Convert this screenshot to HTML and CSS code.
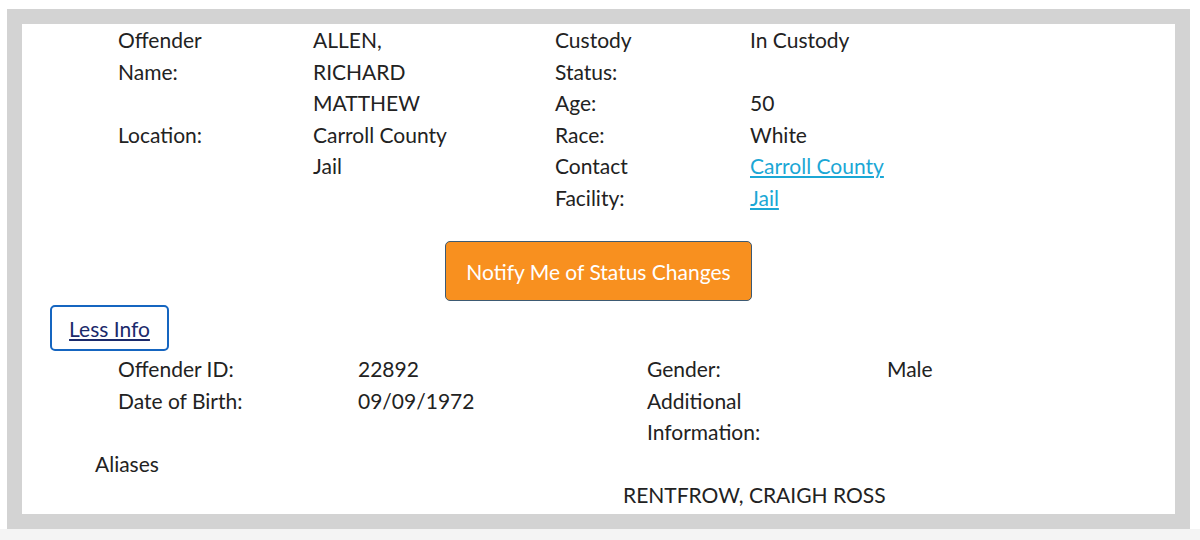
FILE: index.html
```html
<!DOCTYPE html>
<html lang="en">
<head>
    <meta charset="UTF-8">
    <meta name="viewport" content="width=device-width, initial-scale=1.0">
    <title>Offender Details</title>
    <link rel="stylesheet" href="styles.css">
</head>
<body>
    <div class="frame">
        <div class="panel">
            <div class="summary">
                <table class="info-table left-table">
                    <tr>
                        <td class="label">Offender Name:</td>
                        <td>ALLEN, RICHARD MATTHEW</td>
                    </tr>
                    <tr>
                        <td class="label">Location:</td>
                        <td>Carroll County Jail</td>
                    </tr>
                </table>
                <table class="info-table right-table">
                    <tr>
                        <td class="label">Custody Status:</td>
                        <td>In Custody</td>
                    </tr>
                    <tr>
                        <td class="label">Age:</td>
                        <td>50</td>
                    </tr>
                    <tr>
                        <td class="label">Race:</td>
                        <td>White</td>
                    </tr>
                    <tr>
                        <td class="label">Contact Facility:</td>
                        <td><a href="#" class="facility-link">Carroll County Jail</a></td>
                    </tr>
                </table>
            </div>

            <div class="notify">
                <button class="notify-btn">Notify Me of Status Changes</button>
            </div>

            <div class="toggle">
                <button class="less-btn">Less Info</button>
            </div>

            <table class="info-table details-table">
                <tr>
                    <td>Offender ID:</td>
                    <td>22892</td>
                    <td>Gender:</td>
                    <td>Male</td>
                </tr>
                <tr>
                    <td>Date of Birth:</td>
                    <td>09/09/1972</td>
                    <td>Additional Information:</td>
                    <td></td>
                </tr>
            </table>

            <div class="aliases">
                <div class="aliases-title">Aliases</div>
                <div class="aliases-list">
                    <span></span>
                    <span>RENTFROW, CRAIGH ROSS</span>
                </div>
            </div>
        </div>
    </div>
    <div class="page-bottom"></div>
</body>
</html>
```

FILE: styles.css
```css
body {
    font-family: Lato, "Liberation Sans", sans-serif;
    font-size: 21px;
    line-height: 31.5px;
    color: #222;
    margin: 0;
    background-color: #fff;
}
.frame {
    margin: 9px 10px 0 7px;
    border: 15px solid #d3d3d3;
    background-color: #fff;
}
.panel {
    padding: 0 0 3px 0;
}
.page-bottom {
    height: 12px;
    background-color: #f4f4f4;
}
table {
    border-collapse: collapse;
}
td {
    padding: 0;
    vertical-align: top;
}
.summary {
    display: flex;
    align-items: flex-start;
    padding-left: 96px;
}
.info-table td.label {
    width: 128px;
    padding-right: 67px;
}
.left-table td + td {
    width: 138px;
    padding-right: 104px;
}
.right-table td + td {
    width: 150px;
}
.facility-link {
    color: #1ba7d5;
    text-decoration: underline;
}
.notify {
    display: flex;
    justify-content: center;
    margin-top: 28px;
}
.notify-btn {
    height: 60px;
    padding: 0 20px;
    font-family: inherit;
    font-size: 21px;
    color: #fff;
    background-color: #f8901f;
    border: 1px solid #3d5a73;
    border-radius: 5px;
    cursor: pointer;
}
.toggle {
    padding-left: 28px;
    margin-top: 4px;
}
.less-btn {
    width: 119px;
    height: 46px;
    padding: 0;
    font-family: inherit;
    font-size: 21px;
    color: #1b2a6b;
    text-decoration: underline;
    background-color: #fff;
    border: 2px solid #1565c0;
    border-radius: 5px;
    cursor: pointer;
}
.details-table {
    margin: 2px 0 0 96px;
}
.details-table td:nth-child(1) {
    width: 240px;
}
.details-table td:nth-child(2) {
    width: 289px;
}
.details-table td:nth-child(3) {
    width: 120px;
    padding-right: 120px;
}
.aliases {
    padding-left: 73px;
}
.aliases-list {
    display: grid;
    grid-template-columns: 528px 1fr;
}
```
